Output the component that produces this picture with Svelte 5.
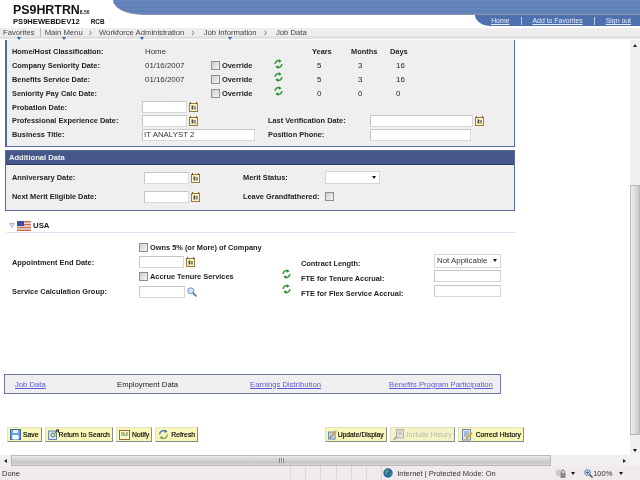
<script>
  const seniority = [
    { label: 'Company Seniority Date:', date: '01/16/2007', y: 5, m: 3, d: 16 },
    { label: 'Benefits Service Date:', date: '01/16/2007', y: 5, m: 3, d: 16 },
    { label: 'Seniority Pay Calc Date:', date: '', y: 0, m: 0, d: 0 }
  ];
  const crumbs = ['Workforce Administration', 'Job Information', 'Job Data'];
</script>

{#snippet cal()}
  <svg class="cal" width="9" height="10" viewBox="0 0 9 10">
    <rect x="0.5" y="1.5" width="8" height="8" fill="#fbf3c8" stroke="#9a7b3a" />
    <rect x="1" y="0" width="1" height="2" fill="#7a5a20" /><rect x="7" y="0" width="1" height="2" fill="#7a5a20" />
    <path d="M2.5 4h1.5v1h-1v1h1v1h-1.5M6 4v3.5" fill="none" stroke="#333" stroke-width="1" />
  </svg>
{/snippet}

{#snippet refresh()}
  <svg class="ref" width="9" height="10" viewBox="0 0 9 10">
    <path d="M1.2 5A3.2 3.2 0 0 1 6 2" fill="none" stroke="#2f9a30" stroke-width="1.5" />
    <path d="M4.8 0.2L7.6 2.2L4.8 3.8Z" fill="#1e8a22" />
    <path d="M7.8 5A3.2 3.2 0 0 1 3 8" fill="none" stroke="#2f9a30" stroke-width="1.5" />
    <path d="M4.2 6.2L1.4 7.8L4.2 9.8Z" fill="#1e8a22" />
  </svg>
{/snippet}

{#snippet check()}
  <span class="chk"></span>
{/snippet}

<div class="root">
  <header class="head">
    <div class="logo">
      <div class="app">PS9HRTRN<small>8.50</small></div>
      <div class="srv"><span>PS9HEWEBDEV12</span><span>RCB</span></div>
    </div>
    <div class="bands">
      <div class="band"></div>
      <nav class="links">
        <a href="#h">Home</a><i></i><a href="#f">Add to Favorites</a><i></i><a href="#s">Sign out</a>
      </nav>
    </div>
  </header>

  <div class="crumbs">
    <span class="c fav">Favorites</span><i class="sep"></i>
    <span class="c mm">Main Menu</span>
    {#each crumbs as c, n}
      <b class="gt">›</b><span class="c" class:tick={n < 2}>{c}</span>
    {/each}
  </div>

  <div class="view">
    <main class="page">
      <section class="box one">
        <div class="r rh">
          <span class="l">Home/Host Classification:</span>
          <span class="v">Home</span><span></span><span></span>
          <b class="n">Years</b><b class="n">Months</b><b class="n">Days</b>
        </div>
        {#each seniority as s}
          <div class="r rh">
            <span class="l">{s.label}</span>
            <span class="v">{s.date}</span>
            <span class="ov">{@render check()}<b>Override</b></span>
            <span class="ic">{@render refresh()}</span>
            <span class="n py">{s.y}</span><span class="n pm">{s.m}</span><span class="n pd">{s.d}</span>
          </div>
        {/each}
        <div class="r rf"><span class="l">Probation Date:</span><span class="f"><span class="in d"></span>{@render cal()}</span></div>
        <div class="r rf">
          <span class="l">Professional Experience Date:</span><span class="f"><span class="in d"></span>{@render cal()}</span>
          <span class="l">Last Verification Date:</span><span class="f"><span class="in w"></span>{@render cal()}</span>
        </div>
        <div class="r rf">
          <span class="l">Business Title:</span><span class="f"><span class="in bt">IT ANALYST 2</span></span>
          <span class="l">Position Phone:</span><span class="f"><span class="in pp"></span></span>
        </div>
      </section>

      <section class="box two">
        <h2>Additional Data</h2>
        <div class="rows2">
          <div class="r2"><span class="l">Anniversary Date:</span><span class="f"><span class="in d"></span>{@render cal()}</span><span class="l">Merit Status:</span><span class="sel blank"><em></em></span></div>
          <div class="r2"><span class="l">Next Merit Eligible Date:</span><span class="f"><span class="in d"></span>{@render cal()}</span><span class="l">Leave Grandfathered:</span>{@render check()}</div>
        </div>
      </section>

      <div class="usa">
        <svg width="6" height="5" viewBox="0 0 6 5"><path d="M0.5 .5H5.5L3 4.5Z" fill="#dfe6f5" stroke="#8aa0d0" stroke-width=".7" /></svg>
        <svg class="flag" width="14" height="10" viewBox="0 0 14 10">
          <rect width="14" height="10" fill="#e9e4e4" />
          <rect y="0" width="14" height="1.4" fill="#d06a50" /><rect y="2.9" width="14" height="1.4" fill="#d06a50" /><rect y="5.8" width="14" height="1.4" fill="#d06a50" /><rect y="8.6" width="14" height="1.4" fill="#d06a50" />
          <rect width="7" height="5" fill="#3c4fa0" />
        </svg>
        <b>USA</b>
      </div>

      <section class="us">
        <div class="usl">
          <div class="u"><span></span><span class="ov">{@render check()}<b>Owns 5% (or More) of Company</b></span></div>
          <div class="u"><span class="l">Appointment End Date:</span><span class="f"><span class="in d"></span>{@render cal()}</span></div>
          <div class="u"><span></span><span class="ov">{@render check()}<b>Accrue Tenure Services</b></span></div>
          <div class="u"><span class="l">Service Calculation Group:</span><span class="f"><span class="in sg"></span>
            <svg width="10" height="10" viewBox="0 0 10 10"><circle cx="3.8" cy="3.8" r="3" fill="#cfe4f4" stroke="#6a9ac0" /><path d="M6 6L9.3 9.3" stroke="#5a7fa6" stroke-width="1.8" /></svg>
          </span></div>
        </div>
        <div class="usr">
          <div class="v2"><span></span><span class="l">Contract Length:</span><span class="sel na">Not Applicable<em></em></span></div>
          <div class="v2"><span class="ic">{@render refresh()}</span><span class="l">FTE for Tenure Accrual:</span><span class="in fte"></span></div>
          <div class="v2"><span class="ic">{@render refresh()}</span><span class="l">FTE for Flex Service Accrual:</span><span class="in fte"></span></div>
        </div>
      </section>

      <div class="tabs">
        <a href="#a">Job Data</a><span>Employment Data</span><a href="#b">Earnings Distribution</a><a href="#c">Benefits Program Participation</a>
      </div>

      <div class="bar">
        <div class="grp">
          <button>
            <svg width="11" height="11" viewBox="0 0 11 11"><rect x=".5" y=".5" width="10" height="10" fill="#6f9fd8" stroke="#3c68a8" /><rect x="3" y="1" width="5" height="3" fill="#e8f0fa" /><rect x="2.5" y="6" width="6" height="4.5" fill="#fff" /></svg>
            Save</button>
          <button class="tight">
            <svg width="11" height="11" viewBox="0 0 11 11"><rect x=".5" y="2" width="8" height="8.5" fill="#dde6f2" stroke="#6b84a8" /><circle cx="5" cy="6" r="2" fill="#f2e7a8" stroke="#4c7a4c" /><path d="M7 3.5L10.5 1M8 1h2.5v2.5" fill="none" stroke="#222" /></svg>
            Return to Search</button>
          <button>
            <svg width="11" height="10" viewBox="0 0 11 10"><rect x=".5" y=".5" width="10" height="9" fill="#fdf5d8" stroke="#a06a28" /><path d="M2 3h4M2 5h7" stroke="#4a9a3a" /><path d="M7 3h2" stroke="#c84a2a" /></svg>
            Notify</button>
          <button>
            <svg width="11" height="11" viewBox="0 0 11 11"><path d="M1.6 5.5A3.9 3.9 0 0 1 7.8 2.4" fill="none" stroke="#3a66b0" stroke-width="1.2" /><path d="M7 .4L9.6 3L6.6 3.8Z" fill="#3a66b0" /><path d="M9.4 5.5A3.9 3.9 0 0 1 3.2 8.6" fill="none" stroke="#6a9a5a" stroke-width="1.2" /><path d="M4 10.6L1.4 8L4.4 7.2Z" fill="#6a9a5a" /></svg>
            Refresh</button>
        </div>
        <div class="grp">
          <button class="tight">
            <svg width="10" height="11" viewBox="0 0 12 12"><rect x=".5" y="3" width="8" height="8.5" fill="#b8d0ec" stroke="#5d80b0" /><path d="M3 9L10 2" stroke="#d8a020" stroke-width="2" /><path d="M2 10.5L3 8.5L4 9.5Z" fill="#333" /></svg>
            Update/Display</button>
          <button class="off">
            <svg width="12" height="12" viewBox="0 0 12 12"><rect x="3.5" y=".5" width="7" height="8.5" fill="#e4e4dc" stroke="#b4b4ac" /><path d="M5 3h4M5 5h4" stroke="#b4b4ac" /><path d="M1 11L4 7" stroke="#aaa" stroke-width="2" /></svg>
            Include History</button>
          <button>
            <svg width="13" height="12" viewBox="0 0 13 12"><rect x="1.5" y=".5" width="8" height="10.5" fill="#dfe8f6" stroke="#6a84b4" /><path d="M3 3h5M3 5h5M3 7h3" stroke="#6a84b4" /><path d="M5 10L11 4" stroke="#e0a820" stroke-width="2" /></svg>
            Correct History</button>
        </div>
      </div>
    </main>
    <aside class="vs">
      <div class="sb"><em class="up"></em></div>
      <div class="vtrack"></div>
      <div class="vthumb"></div>
      <div class="vrest"></div>
      <div class="sb"><em class="dn"></em></div>
    </aside>
  </div>

  <div class="hs">
    <div class="sbh"><em class="lf"></em></div>
    <div class="hthumb"><span class="grip"></span></div>
    <div class="hrest"></div>
    <div class="sbh"><em class="rt"></em></div>
    <div class="corner"></div>
  </div>

  <footer class="status">
    <span class="done">Done</span>
    <i class="cell"></i><i class="cell"></i><i class="cell"></i><i class="cell"></i><i class="cell"></i><i class="cell"></i><i class="cell last"></i>
    <svg class="globe" width="10" height="10" viewBox="0 0 10 10"><circle cx="5" cy="5" r="4.7" fill="#2a63b8" /><path d="M2 2.5L5 1.5L6 3.5L4 5L4.5 7.5L2.5 6.5Z" fill="#58a84a" /><path d="M7 5L9 5.5L7.5 8Z" fill="#58a84a" /></svg>
    <span class="zone">Internet | Protected Mode: On</span>
    <svg class="lock" width="11" height="11" viewBox="0 0 11 11"><circle cx="4" cy="5" r="3.4" fill="#c8ccd2" /><rect x="5.5" y="5" width="5" height="5" fill="#8a8a8a" /><path d="M6.5 5V3.5a1.5 1.5 0 0 1 3 0V5" fill="none" stroke="#777" /></svg>
    <em class="dn drop"></em>
    <svg class="mag" width="9" height="9" viewBox="0 0 9 9"><circle cx="3.5" cy="3.5" r="2.8" fill="#dbe8f6" stroke="#4a74aa" /><path d="M2 3.5h3M3.5 2v3" stroke="#2a548a" stroke-width=".8" /><path d="M5.6 5.6L8.6 8.6" stroke="#555" stroke-width="1.5" /></svg>
    <span class="zoom">100%</span>
    <em class="dn drop2"></em>
  </footer>
</div>

<style>
  :global(body) { margin: 0; background: #fff; }
  .root {
    width: 640px; height: 480px; overflow: hidden; display: flex; flex-direction: column;
    font: 7.9px "Liberation Sans", Arial, sans-serif; color: #222; background: #fff;
    filter: blur(0.25px);
  }
  b { font-weight: 700; }
  /* header */
  .head { display: flex; height: 28px; flex: none; }
  .logo { width: 113px; flex: none; padding: 3px 0 0 13px; box-sizing: border-box; color: #111; }
  .app { font-size: 12.4px; font-weight: 700; line-height: 14px; height: 14px; white-space: nowrap; }
  .app small { font-size: 5px; }
  .srv { display: flex; gap: 11px; font-size: 7.6px; font-weight: 700; line-height: 9px; margin-top: 0; white-space: nowrap; }
  .srv span:last-child { font-size: 6.4px; }
  .bands { flex: 1; display: flex; flex-direction: column; align-items: flex-end; }
  .band {
    width: 100%; height: 15px; flex: none; box-sizing: border-box;
    background: repeating-linear-gradient(#6685bc 0 2px, #5f7fb7 2px 4px);
    border-bottom: 1px solid #8d93a8;
    border-bottom-left-radius: 30px 15px;
  }
  .links {
    width: 165px; height: 11px; background: #4e70ae; border-bottom-left-radius: 16px 11px;
    display: flex; align-items: center; justify-content: flex-end; padding-right: 9px; box-sizing: border-box; font-size: 6.9px;
  }
  .links a { color: #e8eefa; }
  .links i { width: 1px; height: 8px; background: #c0cde6; margin: 0 11px; }
  .crumbs {
    height: 11px; flex: none; background: linear-gradient(#eeeeee 0 8px, #e2e2e2 8px); display: flex; align-items: center; box-sizing: border-box; padding-bottom: 2px;
    font-size: 7.7px; color: #444; padding-left: 3px; line-height: 9px; margin-bottom: 1px; white-space: nowrap;
  }
  .c { position: relative; }
  .fav::after, .mm::after, .tick::after {
    content: ''; position: absolute; left: 50%; bottom: -3px; margin-left: -2px;
    border: 2px solid transparent; border-top: 3px solid #2d62ae; border-bottom: 0;
  }
  .sep { width: 1px; height: 9px; background: #b9b9b9; margin: 0 4px 0 5px; }
  .gt { font-weight: 400; color: #777; margin: 0 9px 0 7px; font-size: 10px; }
  .gt:first-of-type { margin: 0 7px 0 6px; }
  /* main */
  .view { flex: 1; display: flex; min-height: 0; }
  .page { flex: 1; min-width: 0; }
  .box { margin-left: 5px; width: 510px; box-sizing: border-box; border: 1px solid #5d6a9c; background: #efefef; }
  .one { border-top: 0; height: 107px; padding: 5px 0 0 5px; border-left-width: 2px; }
  .r { display: grid; align-items: center; height: 13.8px; }
  .rh { grid-template-columns: 133px 66px 63px 38px 39px 39px 39px; }
  .rf { grid-template-columns: 130px 126px 102px 1fr; }
  .l { font-size: 7.4px; font-weight: 700; color: #1e1e1e; white-space: nowrap; }
  b.n { font-size: 7.4px; color: #1e1e1e; }
  .py { padding-left: 5px; }
  .pm { padding-left: 7px; }
  .pd { padding-left: 6px; }
  .v { color: #333; }
  .ov { display: flex; align-items: center; gap: 2px; white-space: nowrap; }
  .ov b { font-size: 7.4px; color: #1e1e1e; }
  .chk { display: inline-block; flex: none; width: 7px; height: 7px; border: 1px solid #8f8f8f; background: linear-gradient(135deg, #cfcfcf, #f4f4f4); }
  .ic { display: flex; margin-top: -4px; }
  .f { display: flex; align-items: center; gap: 2px; }
  .in {
    display: block; flex: none; box-sizing: border-box; height: 12px; background: #fff;
    border: 1px solid #c5c5c5; border-bottom-color: #d8d8d8; border-right-color: #d8d8d8;
    font-size: 7.9px; line-height: 10px; padding-left: 1px; color: #333;
  }
  .d { width: 45px; }
  .w { width: 103px; }
  .bt { width: 113px; }
  .pp { width: 101px; }
  .sg { width: 46px; }
  .fte { width: 67px; }
  .cal { flex: none; }
  .two { margin-top: 3px; height: 61px; }
  .two h2 {
    margin: 0; height: 13px; background: #46588a; color: #f2f2f2; font-size: 7.6px; font-weight: 700;
    line-height: 13px; padding-left: 3px; border-bottom: 1px solid #2c3a70;
  }
  .rows2 { padding: 3px 0 0 6px; }
  .r2 { display: grid; grid-template-columns: 132px 99px 82px 1fr; align-items: center; height: 19px; }
  .sel {
    display: flex; align-items: center; box-sizing: border-box; height: 13px;
    background: #fff; border: 1px solid #d5d5d5; font-size: 7.9px; color: #333; padding: 0 3px 0 2px;
  }
  .sel em { margin-left: auto; }
  .blank { width: 55px; }
  .na { width: 67px; height: 14px; }
  .sel em, .dn { width: 0; height: 0; border: 2.5px solid transparent; border-top: 3px solid #111; border-bottom: 0; display: block; }
  .usa { display: flex; align-items: center; margin: 8px 0 0 7px; width: 506px; height: 13px; border-bottom: 1px solid #dcdcec; font-size: 7.8px; padding-left: 2px; box-sizing: content-box; gap: 2px; }
  .flag { flex: none; }
  .us { display: flex; padding: 7px 0 0 12px; height: 63px; box-sizing: content-box; }
  .usl { width: 270px; flex: none; }
  .u { display: grid; grid-template-columns: 127px 1fr; align-items: center; height: 14.8px; }
  .usr { margin-top: 13px; }
  .v2 { display: grid; grid-template-columns: 19px 133px 1fr; align-items: center; height: 15px; }
  .v2 .l { margin-top: 6px; }
  .tabs {
    margin: 71px 0 0 4px; width: 497px; height: 20px; box-sizing: border-box; border: 1px solid #6d78a8; background: #efefef;
    display: grid; grid-template-columns: 102px 133px 139px 1fr; align-items: center; padding-left: 10px; font-size: 7.7px; color: #222; white-space: nowrap;
  }
  .tabs a { color: #5c5cd6; }
  .bar { display: flex; justify-content: space-between; width: 524px; margin: 33px 0 0 7px; box-sizing: border-box; padding-right: 7px; }
  .grp { display: flex; gap: 3px; }
  button {
    display: flex; align-items: center; gap: 2px; height: 15px; padding: 0 2px; margin: 0; box-sizing: border-box;
    font: 400 6.8px "Liberation Sans", Arial, sans-serif; color: #000; white-space: nowrap; -webkit-text-stroke: 0.15px #000;
    background: #f8f6b8; border: 0; border-right: 1px solid #8a8a8a; border-bottom: 1px solid #8a8a8a; border-top: 1px solid #e2e2c0; border-left: 1px solid #e2e2c0;
  }
  .tight { gap: 0; }
  .off { color: #b8b8a8; background: #f4f3c8; -webkit-text-stroke: 0; }
  /* scrollbars */
  .vs { width: 10px; flex: none; display: flex; flex-direction: column; background: #f0f0f0; }
  .sb { height: 10px; flex: none; display: flex; align-items: center; justify-content: center; }
  .vtrack { height: 135px; flex: none; }
  .vthumb { height: 250px; flex: none; background: linear-gradient(90deg, #eee, #c9c9c9); border: 1px solid #b8b8b8; box-sizing: border-box; }
  .vrest { flex: 1; }
  .up { width: 0; height: 0; border: 2.5px solid transparent; border-bottom: 3px solid #222; border-top: 0; display: block; }
  .hs { height: 11px; flex: none; display: flex; background: #f0f0f0; }
  .sbh { width: 11px; flex: none; display: flex; align-items: center; justify-content: center; }
  .hthumb { width: 540px; background: linear-gradient(#e8e8e8, #c6c6c6 70%, #d8d8d8); border: 1px solid #b8b8b8; box-sizing: border-box; display: flex; justify-content: center; align-items: center; }
  .grip { width: 5px; height: 5px; background: repeating-linear-gradient(90deg, #888 0 1px, #ddd 1px 2px); }
  .hrest { flex: 1; }
  .corner { width: 10px; flex: none; background: #f4f4f4; }
  .lf { border: 2.5px solid transparent; border-right: 3px solid #222; border-left: 0; width: 0; height: 0; display: block; }
  .rt { border: 2.5px solid transparent; border-left: 3px solid #222; border-right: 0; width: 0; height: 0; display: block; }
  .status { height: 14px; flex: none; background: #f0ebeb; display: flex; align-items: center; font-size: 7.5px; color: #333; white-space: nowrap; }
  .done { width: 288px; padding-left: 2px; flex: none; }
  .cell { width: 1px; height: 14px; background: #dcd8d8; margin-right: 14.2px; flex: none; }
  .cell.last { margin-right: 1px; }
  .globe { flex: none; }
  .zone { margin-left: 4px; width: 158px; flex: none; }
  .lock { flex: none; }
  .drop { margin: 0 9px 0 5px; flex: none; }
  .zoom { margin: 0 8px 0 0; width: 18px; flex: none; }
  .mag { flex: none; }
  .drop2 { flex: none; }
</style>
